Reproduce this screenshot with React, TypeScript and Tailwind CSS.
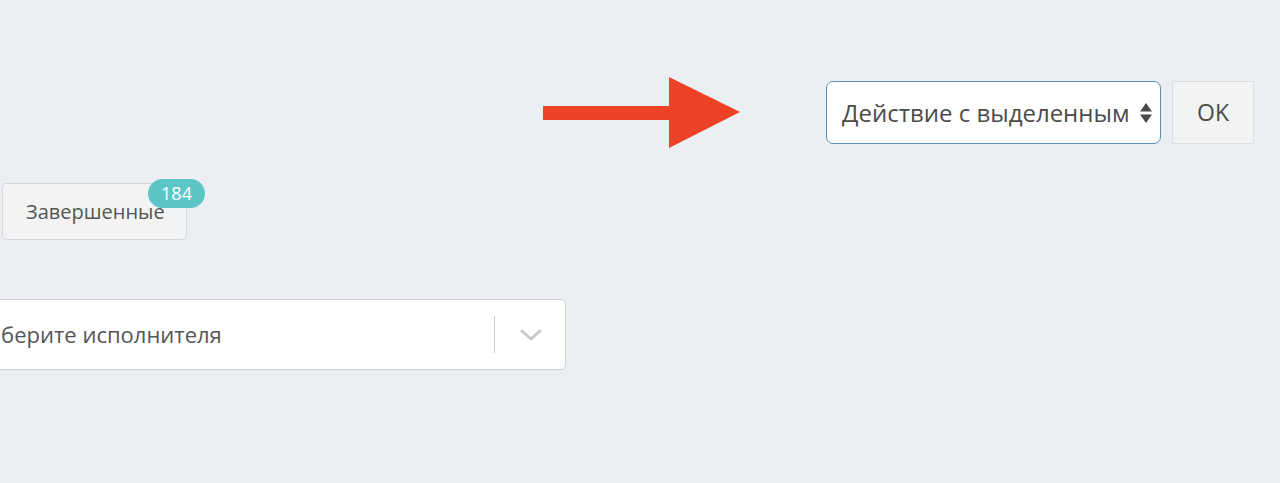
import React from 'react';

const font = { fontFamily: '"Open Sans", "Noto Sans", sans-serif' };

const Arrow = () => (
  <svg width="198" height="72" viewBox="0 0 198 72" className="block">
    <rect x="0" y="29" width="128" height="14" fill="#ee4226" />
    <polygon points="126,0 197,35 126,71" fill="#ee4226" />
  </svg>
);

const UpDown = () => (
  <svg width="14" height="22" viewBox="0 0 14 22" className="block">
    <polygon points="7,1 13,9.5 1,9.5" fill="#4a4a4a" />
    <polygon points="1,12.5 13,12.5 7,21" fill="#4a4a4a" />
  </svg>
);

const Chevron = () => (
  <svg width="22" height="12" viewBox="0 0 22 12" className="block">
    <path d="M2 2 L11 10 L20 2" fill="none" stroke="#c8c8c8" strokeWidth="3" strokeLinecap="round" strokeLinejoin="round" />
  </svg>
);

export default function App() {
  return (
    <div className="w-[1280px] h-[483px] overflow-hidden bg-[#ebeef3] text-[#4b4b4b]" style={font}>
      {/* bulk action row */}
      <div className="flex items-center justify-end pt-[76px] pr-[26px]">
        <div className="mr-[85px] mt-[1px]">
          <Arrow />
        </div>
        <div className="flex h-[63px] w-[335px] items-center justify-between rounded-[7px] border border-[#5b8fb5] bg-white pl-[15px] pr-[7px]">
          <span className="whitespace-nowrap text-[24px]">Действие с выделенным</span>
          <UpDown />
        </div>
        <button className="ml-[11px] flex h-[63px] w-[82px] items-center justify-center border border-[#dcdee2] bg-[#f3f3f3] text-[23px] text-[#4b4b4b]">
          OK
        </button>
      </div>

      {/* status tabs */}
      <div className="mt-[34px] pl-[2px]">
        <div className="relative inline-flex">
          <button className="flex h-[57px] w-[185px] items-center rounded-[4px] border border-[#d6d8dc] bg-[#f3f3f3] pl-[23px] text-[20px] text-[#555]">
            Завершенные
          </button>
          <span className="absolute left-[146px] top-[-4px] flex h-[29px] w-[57px] items-center justify-center rounded-full bg-[#5cc6c7] text-[18px] text-white">
            184
          </span>
        </div>
      </div>

      {/* assignee select */}
      <div className="mt-[59px] ml-[-41px] flex h-[71px] w-[607px] items-center rounded-[5px] border border-[#cfd1d5] bg-white">
        <span className="flex-1 whitespace-nowrap pl-[10px] text-[22px] text-[#555]">Выберите исполнителя</span>
        <div className="h-[37px] w-px bg-[#cfcfcf]" />
        <div className="flex w-[70px] justify-center pl-[1px]">
          <Chevron />
        </div>
      </div>
    </div>
  );
}
